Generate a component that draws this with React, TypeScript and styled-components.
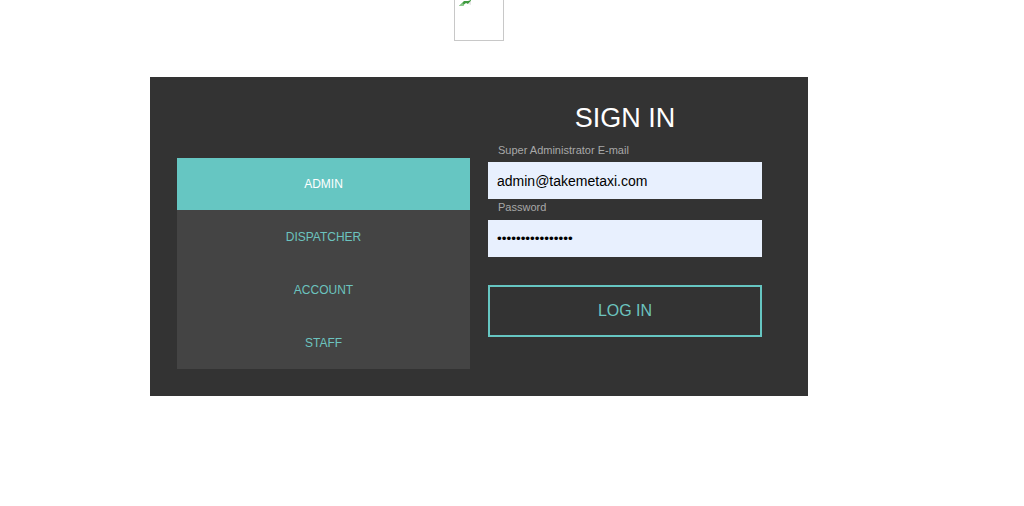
import React from "react";
import styled, { createGlobalStyle } from "styled-components";

const Global = createGlobalStyle`
  html, body { margin: 0; padding: 0; background: #ffffff; }
  body { font-family: "Liberation Sans", Arial, sans-serif; }
`;

const Page = styled.div`
  width: 658px;
  margin-left: 150px;
  display: flex;
  flex-direction: column;
  align-items: center;
`;

const Logo = styled.div`
  width: 48px;
  height: 40px;
  border: 1px solid #c8c8c8;
  border-top: none;
  position: relative;
  overflow: hidden;
  margin-bottom: 36px;
`;

const BrokenIcon = styled.svg`
  position: absolute;
  left: 0;
  top: 0;
`;

const Panel = styled.div`
  align-self: stretch;
  height: 319px;
  background: #333333;
  display: flex;
  padding: 0 46px 0 27px;
  box-sizing: border-box;
`;

const Tabs = styled.div`
  width: 293px;
  margin-top: 81px;
  align-self: flex-start;
  background: #444444;
  display: flex;
  flex-direction: column;
`;

const Tab = styled.div<{ $active?: boolean }>`
  height: ${(p) => (p.$active ? 52 : 53)}px;
  display: flex;
  align-items: center;
  justify-content: center;
  font-size: 12px;
  color: ${(p) => (p.$active ? "#ffffff" : "#6cc3bf")};
  background: ${(p) => (p.$active ? "#66c6c2" : "transparent")};
`;

const Form = styled.div`
  width: 274px;
  margin-left: 18px;
  padding-top: 25px;
  display: flex;
  flex-direction: column;
`;

const Title = styled.h1`
  margin: 0;
  font-size: 27px;
  line-height: 32px;
  font-weight: normal;
  color: #ffffff;
  text-align: center;
`;

const Label = styled.label<{ $first?: boolean }>`
  display: block;
  font-size: 11px;
  line-height: 14px;
  color: #a8a8a8;
  padding-left: 10px;
  margin-top: ${(p) => (p.$first ? 9 : 1)}px;
  margin-bottom: ${(p) => (p.$first ? 5 : 6)}px;
`;

const Input = styled.div`
  height: 37px;
  background: #e8f0fe;
  display: flex;
  align-items: center;
  padding-left: 9px;
  font-size: 14px;
  color: #000000;
`;

const Dots = styled.span`
  font-size: 13.5px;
`;

const Button = styled.div`
  margin-top: 28px;
  height: 52px;
  box-sizing: border-box;
  border: 2px solid #66c6c2;
  display: flex;
  align-items: center;
  justify-content: center;
  color: #6cc3bf;
  font-size: 16px;
`;

export default function App() {
  return (
    <>
      <Global />
      <Page>
        <Logo>
          <BrokenIcon width="16" height="8" viewBox="0 0 16 8">
            <path d="M4 6 L9 1 L13 1 L16 0 V1 L13 4 L11 3 L7 6 Z" fill="#3e9a3e" />
            <path d="M4 6 L8 3 L9 6 Z" fill="#8ccb8c" />
            <path d="M13 4 L16 1 V5 Z" fill="#e6e6e6" />
          </BrokenIcon>
        </Logo>
        <Panel>
          <Tabs>
            <Tab $active>ADMIN</Tab>
            <Tab>DISPATCHER</Tab>
            <Tab>ACCOUNT</Tab>
            <Tab>STAFF</Tab>
          </Tabs>
          <Form>
            <Title>SIGN IN</Title>
            <Label $first>Super Administrator E-mail</Label>
            <Input>admin@takemetaxi.com</Input>
            <Label>Password</Label>
            <Input>
              <Dots>••••••••••••••••</Dots>
            </Input>
            <Button>LOG IN</Button>
          </Form>
        </Panel>
      </Page>
    </>
  );
}
